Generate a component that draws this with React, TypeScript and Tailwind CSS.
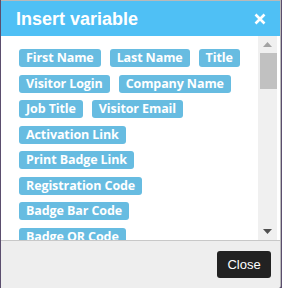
const rows = [
  ['First Name', 'Last Name', 'Title'],
  ['Visitor Login', 'Company Name'],
  ['Job Title', 'Visitor Email'],
  ['Activation Link'],
  ['Print Badge Link'],
  ['Registration Code'],
  ['Badge Bar Code'],
  ['Badge QR Code'],
  ['Badge Number'],
];

export default function App() {
  return (
    <div className="w-[282px] h-[288px] bg-[#5b4e6e] overflow-hidden">
      <div className="ml-px w-[280px] h-[288px] bg-white border-r border-t border-[#b9b9b9] flex flex-col rounded-br-[3px] overflow-hidden">
        {/* Header */}
        <div className="h-[35px] shrink-0 bg-[#4fc0f5] flex items-center justify-between pl-[15px] pr-[14px]">
          <span className="text-white font-bold text-[18px] leading-none" style={{ fontFamily: '"Liberation Sans", Arial, sans-serif' }}>
            Insert variable
          </span>
          <svg width="12" height="12" viewBox="0 0 12 12" className="mt-px">
            <path d="M1.5 1.5 L10.5 10.5 M10.5 1.5 L1.5 10.5" stroke="white" strokeWidth="2.6" strokeLinecap="butt" />
          </svg>
        </div>

        {/* Body */}
        <div className="h-[204px] shrink-0 flex pr-[3px]">
          <div className="flex-1 overflow-hidden pt-[13px] pl-[18px] pr-2">
            <div className="flex flex-col gap-y-[7.5px]" style={{ fontFamily: '"Open Sans", sans-serif' }}>
              {rows.map((row, i) => (
                <div key={i} className="flex gap-x-[9px]">
                  {row.map(t => (
                    <span key={t} className="h-[18px] px-[7px] rounded-[3px] bg-[#67bce1] text-white font-bold text-[12.5px] leading-[18px] whitespace-nowrap tracking-[-0.1px]">
                      {t}
                    </span>
                  ))}
                </div>
              ))}
            </div>
          </div>
          {/* Scrollbar */}
          <div className="w-[19px] bg-[#f0f0f0] flex flex-col items-center">
            <div className="h-[17px] flex items-center justify-center">
              <svg width="9" height="5" viewBox="0 0 9 5"><path d="M0 5 L4.5 0 L9 5 Z" fill="#a3a3a3" /></svg>
            </div>
            <div className="w-[17px] h-[36px] bg-[#c1c1c1] ml-[2px]" />
            <div className="flex-1" />
            <div className="h-[17px] flex items-center justify-center">
              <svg width="9" height="5" viewBox="0 0 9 5"><path d="M0 0 L9 0 L4.5 5 Z" fill="#505050" /></svg>
            </div>
          </div>
        </div>

        {/* Footer */}
        <div className="flex-1 bg-[#eeeeee] border-t border-[#c8c8c8] flex justify-end items-start pt-[10px] pr-[9px]">
          <button className="w-[54px] h-[27px] rounded-[3px] bg-[#222222] text-white text-[13px]" style={{ fontFamily: '"Liberation Sans", Arial, sans-serif' }}>
            Close
          </button>
        </div>
      </div>
    </div>
  );
}
